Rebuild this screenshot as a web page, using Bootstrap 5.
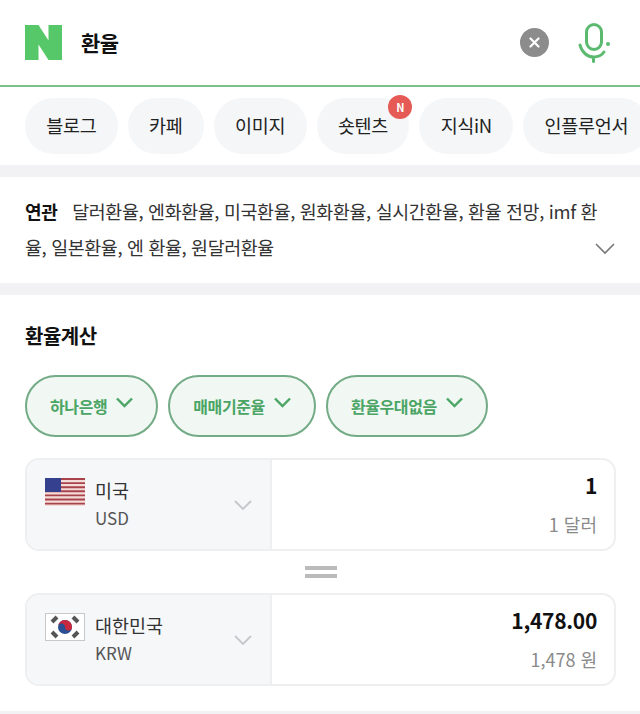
<!DOCTYPE html>
<html lang="ko">
<head>
    <meta charset="UTF-8">
    <meta name="viewport" content="width=device-width, initial-scale=1.0">
    <title>환율 : 검색</title>
    <link rel="stylesheet" href="https://cdn.jsdelivr.net/npm/bootstrap@5.3.0/dist/css/bootstrap.min.css">
    <style>
        html, body {
            width: 640px;
            height: 714px;
            overflow: hidden;
        }
        body {
            font-family: "Noto Sans CJK KR", "Noto Sans", sans-serif;
            background-color: #fff;
            color: #111;
        }
        .search-bar {
            height: 87px;
            padding: 0 30px 0 25px;
            border-bottom: 2px solid #7cc08a;
        }
        .search-word {
            font-size: 21px;
            font-weight: 700;
            margin-left: 19px;
            letter-spacing: -0.5px;
        }
        .clear-btn {
            width: 29px;
            height: 29px;
            background-color: #8c8c8c;
            margin-right: 29px;
        }
        .tab-row {
            height: 78px;
            padding: 11px 0 0 25px;
            gap: 10px;
            overflow: hidden;
        }
        .tab-chip {
            height: 56px;
            padding: 0 21.3px;
            background-color: #f5f6f8;
            border-radius: 28px;
            font-size: 18.5px;
            white-space: nowrap;
            color: #222;
            flex: none;
            letter-spacing: -0.3px;
        }
        .new-dot {
            top: -3px;
            right: -3px;
            width: 24px;
            height: 24px;
            background-color: #e55a55;
            color: #fff;
            font-size: 11px;
            font-weight: 700;
        }
        .gap-band {
            height: 12px;
            background-color: #f2f2f5;
        }
        .related-box {
            height: 106px;
            padding: 16px 25px 0;
            font-size: 18.4px;
            line-height: 36px;
            color: #333;
            letter-spacing: -0.35px;
        }
        .related-box b {
            color: #111;
            font-size: 18px;
            margin-right: 10px;
        }
        .related-arrow {
            right: 25px;
            top: 66px;
        }
        .calc-box {
            height: 416px;
            padding: 26px 24px 0 25px;
        }
        .calc-title {
            font-size: 20px;
            font-weight: 700;
            line-height: 30px;
            margin-bottom: 24px;
            letter-spacing: -0.5px;
        }
        .filter-row {
            gap: 10px;
            margin-bottom: 21px;
        }
        .filter-chip {
            height: 62px;
            padding: 0 23px;
            gap: 9px;
            border: 2px solid #72ab85;
            border-radius: 31px;
            background-color: #f1f7f3;
            color: #4ba565;
            font-size: 16px;
            font-weight: 700;
            letter-spacing: -0.4px;
        }
        .filter-chip svg {
            margin-top: -8px;
        }
        .money-box {
            height: 93px;
            border: 2px solid #eeeff1;
            border-radius: 14px;
            overflow: hidden;
        }
        .money-left {
            width: 245px;
            flex: none;
            padding: 15px 18px 0 18px;
            background-color: #f6f7f9;
            border-right: 2px solid #eeeff1;
        }
        .flag-wrap {
            width: 40px;
            height: 28px;
            margin-top: 3px;
            margin-right: 10px;
            flex: none;
        }
        .country-name {
            font-size: 18.5px;
            line-height: 30px;
            color: #333;
        }
        .country-code {
            font-size: 17px;
            line-height: 26px;
            color: #555;
        }
        .money-right {
            padding: 7px 17px 0 0;
        }
        .money-value {
            font-size: 21px;
            font-weight: 700;
            line-height: 36px;
            color: #111;
            letter-spacing: -0.3px;
        }
        .money-unit {
            font-size: 18px;
            line-height: 36px;
            color: #8a8a8a;
            margin-top: 3px;
        }
        .equal-mark {
            height: 42px;
        }
        .equal-mark span {
            width: 32px;
            height: 4px;
            background-color: #bbb;
            display: block;
        }
    </style>
</head>
<body>
    <!-- Search bar -->
    <div class="search-bar d-flex align-items-center">
        <svg width="37" height="35" viewBox="0 0 37 35"><path fill="#56c86a" d="M0 0H13.5L23.5 15.5V0H37V35H23.5L13.5 19.5V35H0Z"/></svg>
        <span class="search-word flex-grow-1">환율</span>
        <span class="clear-btn rounded-circle d-flex align-items-center justify-content-center">
            <svg width="11" height="11" viewBox="0 0 11 11"><path d="M1.5 1.5L9.5 9.5M9.5 1.5L1.5 9.5" stroke="#fff" stroke-width="2.2" stroke-linecap="round"/></svg>
        </span>
        <svg width="32" height="40" viewBox="0 0 32 40" fill="none" stroke="#5cba70" stroke-width="3" stroke-linecap="round"><rect x="8.5" y="1.5" width="15" height="25" rx="7.5"/><path d="M2 22C4 30 10 34 15.5 34C20 34 24 32 26 29M15.5 34V38.5"/><circle cx="30" cy="21" r="2" fill="#5cba70" stroke="none"/></svg>
    </div>

    <!-- Tabs -->
    <div class="tab-row d-flex">
        <span class="tab-chip d-flex align-items-center">블로그</span>
        <span class="tab-chip d-flex align-items-center">카페</span>
        <span class="tab-chip d-flex align-items-center">이미지</span>
        <span class="tab-chip d-flex align-items-center position-relative">숏텐츠
            <span class="new-dot position-absolute rounded-circle d-flex align-items-center justify-content-center">N</span>
        </span>
        <span class="tab-chip d-flex align-items-center">지식iN</span>
        <span class="tab-chip d-flex align-items-center">인플루언서</span>
    </div>
    <div class="gap-band"></div>

    <!-- Related searches -->
    <div class="related-box position-relative">
        <b>연관</b> 달러환율, 엔화환율, 미국환율, 원화환율, 실시간환율, 환율 전망, imf 환율, 일본환율, 엔 환율, 원달러환율
        <svg class="related-arrow position-absolute" width="20" height="12" viewBox="0 0 20 12" fill="none" stroke="#777" stroke-width="1.6"><path d="M1 1L10 10L19 1"/></svg>
    </div>
    <div class="gap-band"></div>

    <!-- Exchange calculator -->
    <div class="calc-box">
        <div class="calc-title">환율계산</div>
        <div class="filter-row d-flex">
            <span class="filter-chip d-flex align-items-center">하나은행
                <svg width="17" height="11" viewBox="0 0 17 11" fill="none" stroke="#4ba565" stroke-width="2.4"><path d="M1 1.5L8.5 9L16 1.5"/></svg>
            </span>
            <span class="filter-chip d-flex align-items-center">매매기준율
                <svg width="17" height="11" viewBox="0 0 17 11" fill="none" stroke="#4ba565" stroke-width="2.4"><path d="M1 1.5L8.5 9L16 1.5"/></svg>
            </span>
            <span class="filter-chip d-flex align-items-center">환율우대없음
                <svg width="17" height="11" viewBox="0 0 17 11" fill="none" stroke="#4ba565" stroke-width="2.4"><path d="M1 1.5L8.5 9L16 1.5"/></svg>
            </span>
        </div>

        <div class="money-box d-flex">
            <div class="money-left d-flex position-relative">
                <svg class="flag-wrap" viewBox="0 0 40 28">
                    <rect width="40" height="28" fill="#f4dcd8"/>
                    <path stroke="#a8434c" stroke-width="1.9" d="M0 1H40M0 5.1H40M0 9.2H40M0 13.3H40M0 17.4H40M0 21.5H40M0 25.6H40"/>
                    <rect width="16" height="14" fill="#35408f"/>
                </svg>
                <div>
                    <div class="country-name">미국</div>
                    <div class="country-code">USD</div>
                </div>
                <svg class="position-absolute" style="right:18px;top:40px" width="18" height="11" viewBox="0 0 18 11" fill="none" stroke="#c6c7ca" stroke-width="1.8"><path d="M1 1L9 9L17 1"/></svg>
            </div>
            <div class="money-right flex-grow-1 text-end">
                <div class="money-value">1</div>
                <div class="money-unit">1 달러</div>
            </div>
        </div>

        <div class="equal-mark d-flex flex-column align-items-center justify-content-center gap-1">
            <span></span>
            <span></span>
        </div>

        <div class="money-box d-flex">
            <div class="money-left d-flex position-relative">
                <svg class="flag-wrap" viewBox="0 0 40 28">
                    <rect x="0.5" y="0.5" width="39" height="27" fill="#fff" stroke="#c8c8c8"/>
                    <circle cx="20" cy="14" r="7" fill="#2a4f92"/>
                    <path fill="#c9283e" d="M13 14A7 7 0 0 1 27 14A3.5 3.5 0 0 1 20 14A3.5 3.5 0 0 0 13 14Z"/>
                    <path stroke="#555" stroke-width="4" d="M7 9L12 4M28 4L33 9M7 19L12 24M28 24L33 19"/>
                </svg>
                <div>
                    <div class="country-name">대한민국</div>
                    <div class="country-code">KRW</div>
                </div>
                <svg class="position-absolute" style="right:18px;top:40px" width="18" height="11" viewBox="0 0 18 11" fill="none" stroke="#c6c7ca" stroke-width="1.8"><path d="M1 1L9 9L17 1"/></svg>
            </div>
            <div class="money-right flex-grow-1 text-end">
                <div class="money-value">1,478.00</div>
                <div class="money-unit">1,478 원</div>
            </div>
        </div>
    </div>
    <div class="gap-band"></div>

    <script src="https://cdn.jsdelivr.net/npm/bootstrap@5.3.0/dist/js/bootstrap.bundle.min.js"></script>
</body>
</html>
